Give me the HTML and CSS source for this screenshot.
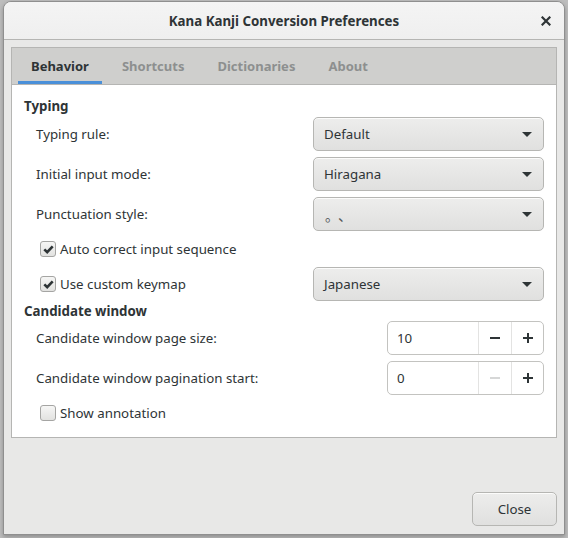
FILE: index.html
```html
<!DOCTYPE html>
<html>
<head>
<meta charset="utf-8">
<link rel="stylesheet" href="styles.css">
</head>
<body>
<div class="window">
  <div class="titlebar">
    <span class="title">Kana Kanji Conversion Preferences</span>
    <span class="close-x">
      <svg width="10" height="10" viewBox="0 0 10 10"><path d="M1.5 1.5 L8.5 8.5 M8.5 1.5 L1.5 8.5" stroke="#2e3436" stroke-width="2.2" stroke-linecap="square"/></svg>
    </span>
  </div>
  <div class="content">
    <div class="notebook">
      <div class="tabs">
        <div class="tab active">Behavior</div>
        <div class="tab">Shortcuts</div>
        <div class="tab">Dictionaries</div>
        <div class="tab">About</div>
      </div>
      <div class="page">
        <div class="heading">Typing</div>
        <div class="row r-first">
          <span class="label">Typing rule:</span>
          <div class="combo"><span>Default</span><span class="arrow"></span></div>
        </div>
        <div class="row">
          <span class="label">Initial input mode:</span>
          <div class="combo"><span>Hiragana</span><span class="arrow"></span></div>
        </div>
        <div class="row">
          <span class="label">Punctuation style:</span>
          <div class="combo"><span class="cjk">。、</span><span class="arrow"></span></div>
        </div>
        <div class="checkrow">
          <span class="check checked"><svg width="13" height="13" viewBox="0 0 13 13"><path d="M2.3 6.3 L5.2 9.2 L10.7 3.3" fill="none" stroke="#2e3436" stroke-width="2.6"/></svg></span>
          <span class="checklabel">Auto correct input sequence</span>
        </div>
        <div class="row">
          <div class="checkinline">
            <span class="check checked"><svg width="13" height="13" viewBox="0 0 13 13"><path d="M2.3 6.3 L5.2 9.2 L10.7 3.3" fill="none" stroke="#2e3436" stroke-width="2.6"/></svg></span>
            <span class="checklabel">Use custom keymap</span>
          </div>
          <div class="combo"><span>Japanese</span><span class="arrow"></span></div>
        </div>
        <div class="heading h2">Candidate window</div>
        <div class="row r-spin1">
          <span class="label">Candidate window page size:</span>
          <div class="spin">
            <span class="spin-val">10</span>
            <span class="spin-btn"><svg width="12" height="12" viewBox="0 0 12 12"><path d="M1 6 H11" stroke="#2e3436" stroke-width="2"/></svg></span>
            <span class="spin-btn"><svg width="12" height="12" viewBox="0 0 12 12"><path d="M1 6 H11 M6 1 V11" stroke="#2e3436" stroke-width="2"/></svg></span>
          </div>
        </div>
        <div class="row">
          <span class="label">Candidate window pagination start:</span>
          <div class="spin">
            <span class="spin-val">0</span>
            <span class="spin-btn"><svg width="12" height="12" viewBox="0 0 12 12"><path d="M1 6 H11" stroke="#d6d7d7" stroke-width="2"/></svg></span>
            <span class="spin-btn"><svg width="12" height="12" viewBox="0 0 12 12"><path d="M1 6 H11 M6 1 V11" stroke="#2e3436" stroke-width="2"/></svg></span>
          </div>
        </div>
        <div class="checkrow">
          <span class="check"></span>
          <span class="checklabel">Show annotation</span>
        </div>
      </div>
    </div>
    <div class="actions">
      <div class="button">Close</div>
    </div>
  </div>
</div>
</body>
</html>
```
FILE: styles.css
```css
* { box-sizing: border-box; }
html, body { margin: 0; padding: 0; }
body {
  width: 568px;
  height: 538px;
  background: #bdbdbd;
  font-family: "Noto Sans", "Open Sans", sans-serif;
  font-size: 13.3px;
  color: #2e3436;
  overflow: hidden;
}
.window {
  margin: 1px 0 0 3px;
  width: 562px;
  height: 534px;
  border: 1px solid #8f8f8f;
  border-radius: 8px 8px 0 0;
  background: #e8e8e7;
  display: flex;
  flex-direction: column;
  box-shadow: 0 2px 4px rgba(0,0,0,0.25);
}
.titlebar {
  height: 38px;
  flex: none;
  border-bottom: 1px solid #b5b5b3;
  background: linear-gradient(#f4f4f4, #efefef);
  border-radius: 7px 7px 0 0;
  display: flex;
  align-items: center;
  justify-content: center;
  position: relative;
}
.title {
  font-weight: bold;
  font-size: 13.3px;
}
.close-x {
  position: absolute;
  right: 13px;
  top: 14px;
  width: 10px;
  height: 10px;
  display: flex;
}
.content {
  flex: 1;
  padding: 7px 7px 8px 7px;
  display: flex;
  flex-direction: column;
}
.notebook {
  height: 391px;
  border: 1px solid #b5b5b3;
  display: flex;
  flex-direction: column;
  flex: none;
}
.tabs {
  height: 37px;
  flex: none;
  background: #cfcfcd;
  border-bottom: 1px solid #b5b5b3;
  display: flex;
  padding-left: 6px;
  gap: 7px;
}
.tab {
  padding: 0 13px;
  font-weight: bold;
  font-size: 13px;
  color: #8d8f8f;
  display: flex;
  align-items: center;
  border-bottom: 3px solid transparent;
  padding-top: 3px;
}
.tab.active {
  color: #2e3436;
  border-bottom-color: #4a90d9;
}
.page {
  flex: 1;
  background: #ffffff;
  padding: 11px 12px 0 12px;
  display: flex;
  flex-direction: column;
}
.heading {
  font-weight: bold;
  height: 21px;
  line-height: 20px;
}
.heading.h2 {
  height: 20px;
  line-height: 20px;
}
.row {
  height: 34px;
  margin-top: 6px;
  display: flex;
  align-items: center;
  justify-content: space-between;
  padding-left: 12px;
  flex: none;
}
.row.r-first { margin-top: 0; }
.row.r-spin1 { margin-top: 0; }
.combo {
  width: 231px;
  height: 34px;
  border: 1px solid #b6b6b3;
  border-radius: 5px;
  background: linear-gradient(#ededec, #e0e0df);
  display: flex;
  align-items: center;
  justify-content: space-between;
  padding: 0 11px 0 10px;
  box-shadow: inset 0 1px rgba(255,255,255,0.8);
}
.arrow {
  width: 0;
  height: 0;
  border-left: 5px solid transparent;
  border-right: 5px solid transparent;
  border-top: 5px solid #2e3436;
}
.cjk {
  font-family: "Noto Sans CJK JP", sans-serif;
  font-size: 14px;
  color: #555a5a;
  letter-spacing: 6px;
  position: relative;
  top: 1px;
  left: 1px;
}
.checkrow {
  height: 24px;
  margin-top: 6px;
  display: flex;
  align-items: center;
  padding-left: 16px;
  flex: none;
}
.checkinline {
  display: flex;
  align-items: center;
  margin-left: 4px;
}
.check {
  width: 16px;
  height: 16px;
  border: 1px solid #a5a5a3;
  border-radius: 3px;
  background: linear-gradient(#f6f6f5, #e2e2e0);
  display: flex;
  align-items: center;
  justify-content: center;
  margin-right: 4px;
  flex: none;
}
.spin {
  width: 157px;
  height: 34px;
  border: 1px solid #c3c3c0;
  border-radius: 5px;
  background: #fff;
  display: flex;
}
.spin-val {
  flex: 1;
  padding-left: 9px;
  display: flex;
  align-items: center;
}
.spin-btn {
  width: 33px;
  border-left: 1px solid #e3e3e2;
  display: flex;
  align-items: center;
  justify-content: center;
}
.spin-btn:last-child { width: 32px; }
.actions {
  flex: 1;
  display: flex;
  align-items: flex-end;
  justify-content: flex-end;
}
.button {
  width: 85px;
  height: 34px;
  border: 1px solid #b6b6b3;
  border-radius: 5px;
  background: linear-gradient(#ededec, #e0e0df);
  display: flex;
  align-items: center;
  justify-content: center;
  box-shadow: inset 0 1px rgba(255,255,255,0.8);
}
```
